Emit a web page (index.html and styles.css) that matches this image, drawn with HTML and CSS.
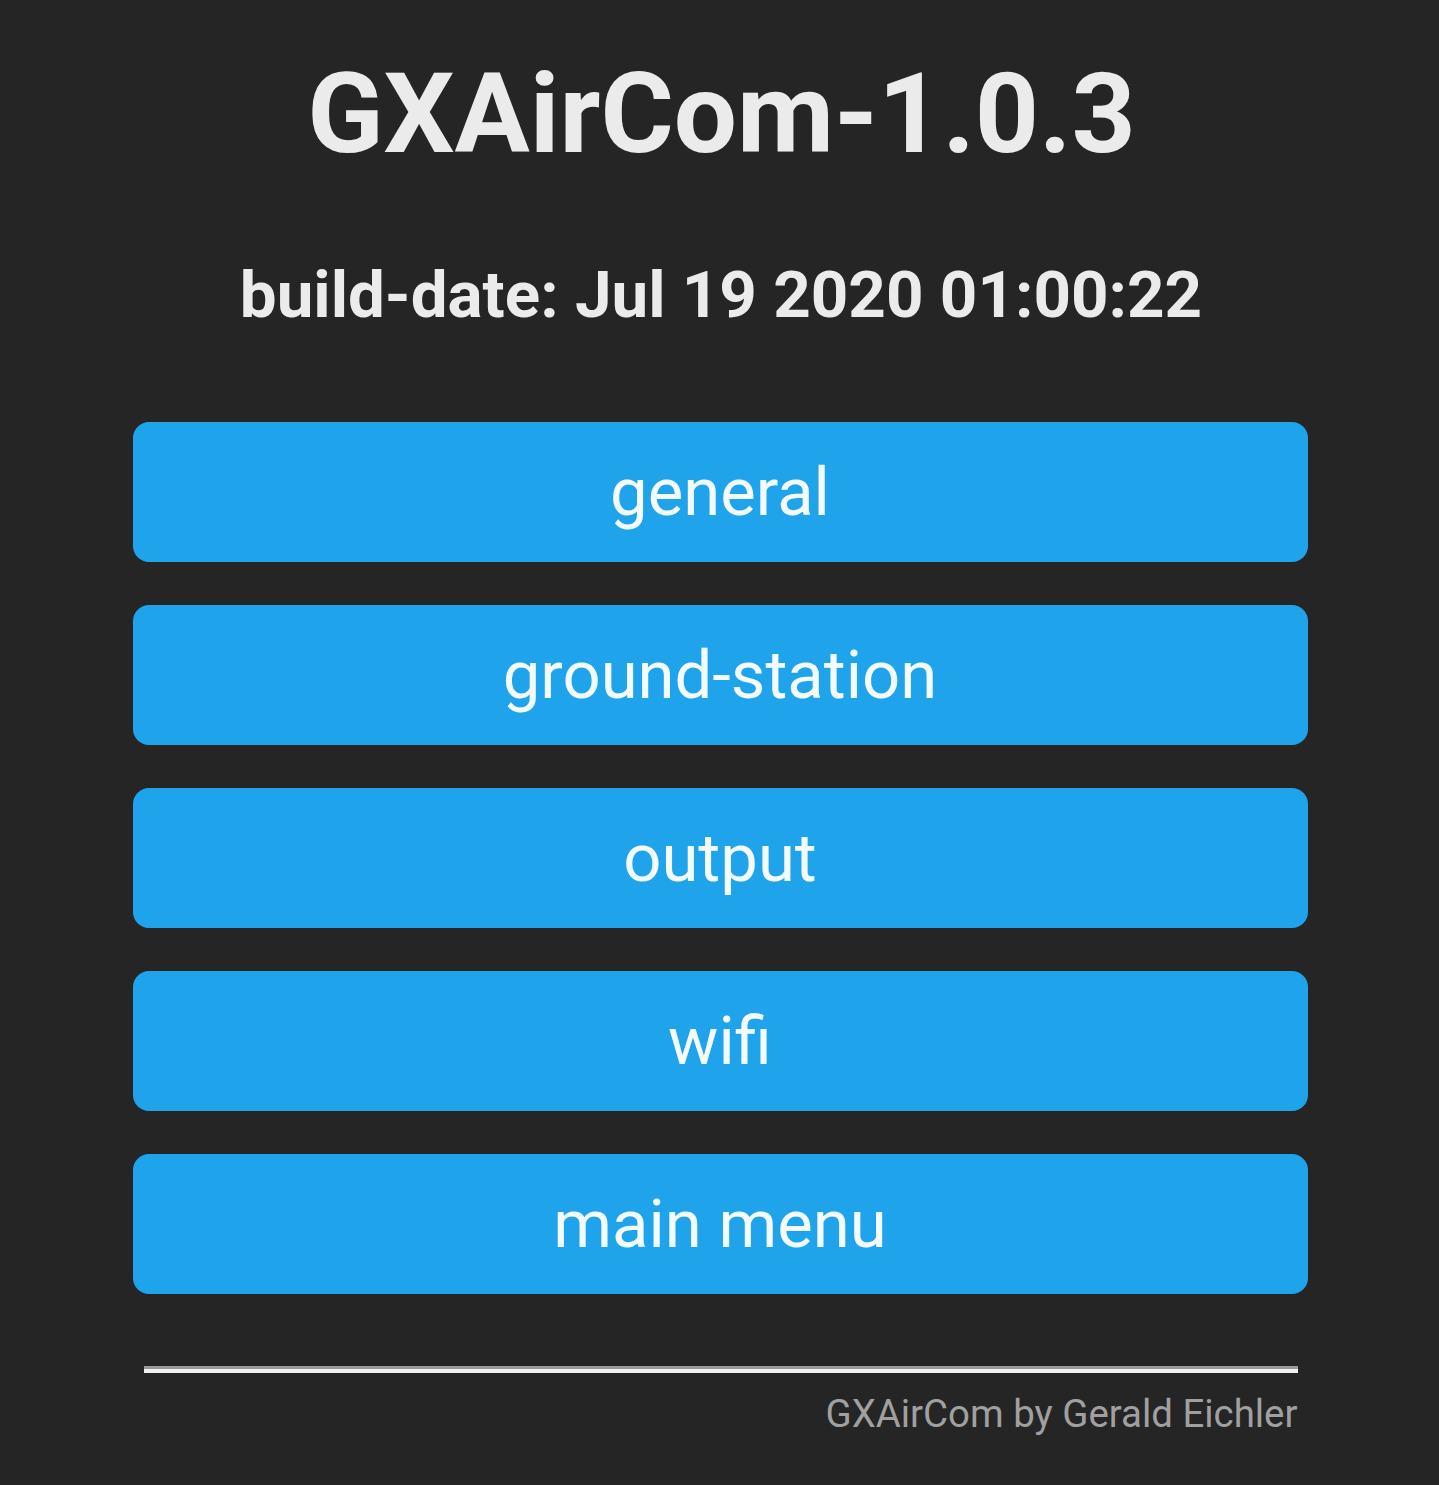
FILE: index.html
```html
<!DOCTYPE html>
<html>
<head>
<meta charset="utf-8">
<link rel="stylesheet" href="styles.css">
</head>
<body>
<main class="page">
  <h1 class="title">GXAirCom-1.0.3</h1>
  <h2 class="build">build-date: Jul 19 2020 01:00:22</h2>
  <nav class="menu">
    <a class="btn" href="#">general</a>
    <a class="btn" href="#">ground-station</a>
    <a class="btn" href="#">output</a>
    <a class="btn" href="#">wifi</a>
    <a class="btn" href="#">main menu</a>
  </nav>
  <footer class="footer">
    <hr class="rule">
    <p class="credit">GXAirCom by Gerald Eichler</p>
  </footer>
</main>
</body>
</html>
```
FILE: styles.css
```css
html, body {
  margin: 0;
  padding: 0;
  background: #252525;
}
body {
  font-family: Roboto, "Liberation Sans", sans-serif;
  color: #ebebeb;
  min-height: 1485px;
}
.page {
  display: flex;
  flex-direction: column;
  align-items: center;
  padding-top: 58px;
}
.title {
  margin: 0 0 0 4px;
  font-size: 112px;
  line-height: 1;
  font-weight: 700;
  text-align: center;
}
.build {
  margin: 92px 0 0 3px;
  font-size: 65.5px;
  line-height: 1;
  font-weight: 700;
  text-align: center;
}
.menu {
  margin: 94px 0 0 1px;
  width: 1175px;
  display: flex;
  flex-direction: column;
  gap: 43px;
}
.btn {
  height: 140px;
  display: flex;
  align-items: center;
  justify-content: center;
  background: #1fa3ea;
  border-radius: 16px;
  color: #f4fbff;
  text-decoration: none;
  font-size: 67px;
  font-weight: 400;
}
.footer {
  width: 1154px;
  margin: 72px 0 0 2px;
}
.rule {
  margin: 0;
  height: 0;
  border: none;
  border-top: 3px solid #9a9a9a;
  border-bottom: 4px solid #f0f0f0;
}
.credit {
  margin: 22px 0 0;
  text-align: right;
  font-size: 38.4px;
  line-height: 1;
  color: #a0a0a0;
}
```
